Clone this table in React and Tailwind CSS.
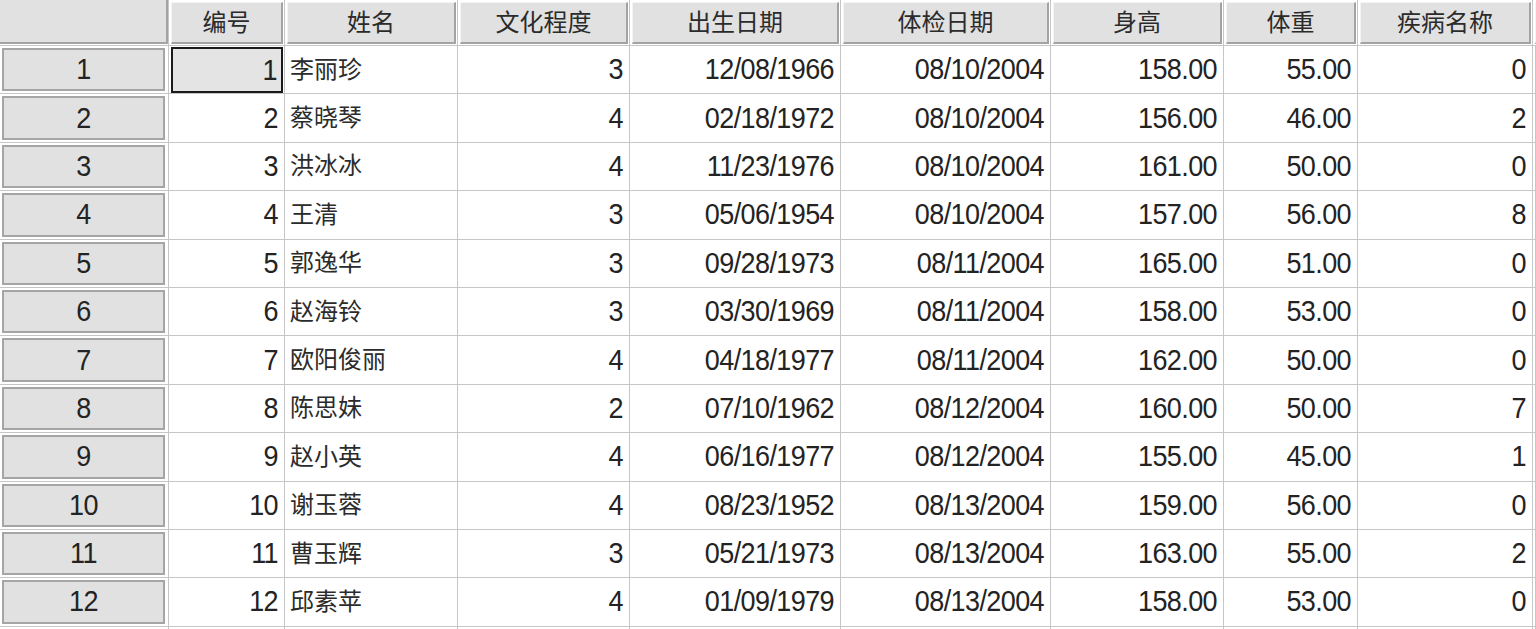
import React from 'react'

const columns = ['编号', '姓名', '文化程度', '出生日期', '体检日期', '身高', '体重', '疾病名称', '']

const rows = [
  [1, '李丽珍', 3, '12/08/1966', '08/10/2004', '158.00', '55.00', 0],
  [2, '蔡晓琴', 4, '02/18/1972', '08/10/2004', '156.00', '46.00', 2],
  [3, '洪冰冰', 4, '11/23/1976', '08/10/2004', '161.00', '50.00', 0],
  [4, '王清', 3, '05/06/1954', '08/10/2004', '157.00', '56.00', 8],
  [5, '郭逸华', 3, '09/28/1973', '08/11/2004', '165.00', '51.00', 0],
  [6, '赵海铃', 3, '03/30/1969', '08/11/2004', '158.00', '53.00', 0],
  [7, '欧阳俊丽', 4, '04/18/1977', '08/11/2004', '162.00', '50.00', 0],
  [8, '陈思妹', 2, '07/10/1962', '08/12/2004', '160.00', '50.00', 7],
  [9, '赵小英', 4, '06/16/1977', '08/12/2004', '155.00', '45.00', 1],
  [10, '谢玉蓉', 4, '08/23/1952', '08/13/2004', '159.00', '56.00', 0],
  [11, '曹玉辉', 3, '05/21/1973', '08/13/2004', '163.00', '55.00', 2],
  [12, '邱素苹', 4, '01/09/1979', '08/13/2004', '158.00', '53.00', 0],
]

const gridCols = 'grid grid-cols-[169px_116px_173px_172px_211px_210px_173px_134px_175px_1fr]'
const cell = 'border-r border-b border-[#c6c6c6] overflow-hidden'

// numbers in the original are a bit taller than Arial
const Num = ({ children }) => (
  <span className="inline-block scale-y-110 text-[27px] tracking-[-0.6px] leading-none">{children}</span>
)

const App = () => {
  return (
    <div
      className="w-[1536px] h-[629px] overflow-hidden bg-white text-[#232323]"
      style={{ fontFamily: '"Liberation Sans", Arial, "Noto Sans CJK SC", sans-serif' }}
    >
      {/* header row */}
      <div className={`${gridCols} h-[46px]`}>
        <div className={`${cell} pb-[1px]`}>
          <div className="h-full bg-[#e1e1e1] border-b-2 border-r-2 border-[#a3a3a3]" />
        </div>
        {columns.map((c, i) => (
          <div key={i} className={`${cell} pt-[2px] pl-[2px] pr-[1px] pb-[1px]`}>
            <div className="h-full bg-[#e1e1e1] border-t border-l border-[#f4f4f4] border-b-2 border-r-2 border-b-[#a3a3a3] border-r-[#a3a3a3] flex items-center justify-center text-[24px] leading-none text-[#2b2b2b]">
              {c}
            </div>
          </div>
        ))}
      </div>

      {rows.map((r, ri) => (
        <div key={ri} className={`${gridCols} h-[48.4px]`}>
          <div className={`${cell} pt-[2px] pl-[2px] pr-[3px] pb-[2px]`}>
            <div className="h-full bg-[#e1e1e1] border-2 border-[#a5a5a5] flex items-center justify-center">
              <Num>{ri + 1}</Num>
            </div>
          </div>
          {r.map((v, ci) => {
            if (ri === 0 && ci === 0) {
              return (
                <div key={ci} className={`${cell} pt-[1px] pl-[2px] pr-[1px] pb-0`}>
                  <div className="h-full bg-[#e4e4e4] border-2 border-[#1a1a1a] flex items-center justify-end pr-[4px]">
                    <Num>{v}</Num>
                  </div>
                </div>
              )
            }
            if (ci === 1) {
              return (
                <div key={ci} className={`${cell} flex items-center pl-[5px] text-[24px] leading-none text-[#2b2b2b]`}>
                  {v}
                </div>
              )
            }
            return (
              <div key={ci} className={`${cell} flex items-center justify-end pr-[6px]`}>
                <Num>{v}</Num>
              </div>
            )
          })}
          <div className={cell} />
        </div>
      ))}

      {/* partially visible next row */}
      <div className={`${gridCols} h-[40px]`}>
        <div className={`${cell} pt-[2px] pl-[2px] pr-[3px]`}>
          <div className="h-full bg-[#e1e1e1] border-2 border-[#a5a5a5]" />
        </div>
        {columns.map((c, i) => (
          <div key={i} className={cell} />
        ))}
      </div>
    </div>
  )
}

export default App
